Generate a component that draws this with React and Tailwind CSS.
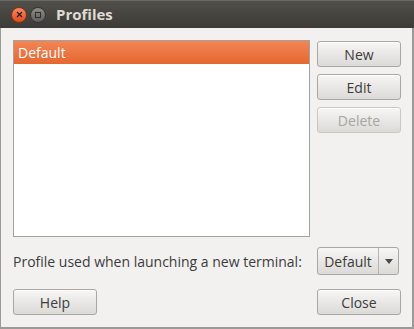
const Button = ({ children, disabled }) => (
  <button
    className={
      "h-[26px] w-[84px] shrink-0 rounded-[3px] border bg-gradient-to-b from-[#f7f6f5] to-[#dcdad7] text-[14px] shadow-[inset_0_1px_0_#ffffff] " +
      (disabled ? "text-[#a6a5a1] border-[#c9c8c4]" : "text-[#3c3c3c] border-[#a8a7a3]")
    }
  >
    {children}
  </button>
);

export default function App() {
  return (
    <div
      className="w-[414px] h-[329px] flex flex-col bg-[#f2f1f0] overflow-hidden"
      style={{ fontFamily: '"Open Sans", "DejaVu Sans", sans-serif' }}
    >
      {/* title bar */}
      <div className="h-[28px] flex items-center bg-gradient-to-b from-[#504f4a] to-[#3c3b37] border-t border-[#6a6964]">
        <div className="ml-[11px] w-[16px] h-[16px] rounded-full bg-gradient-to-b from-[#f58a5f] to-[#df4a1c] border border-[#8a2e12] flex items-center justify-center">
          <svg width="7" height="7" viewBox="0 0 7 7">
            <path d="M1 1 L6 6 M6 1 L1 6" stroke="#3c1a0c" strokeWidth="1.4" />
          </svg>
        </div>
        <div className="ml-[3px] w-[16px] h-[16px] rounded-full bg-gradient-to-b from-[#8d8c87] to-[#5f5e5a] border border-[#353430] flex items-center justify-center">
          <div className="w-[6px] h-[6px] border border-[#2e2d2a]" />
        </div>
        <div className="ml-[10px] text-[15px] font-bold text-[#dfdbd2]">Profiles</div>
      </div>

      {/* body */}
      <div className="flex-1 flex flex-col border-r-2 border-b-2 border-l border-[#9b9a96] pl-[12px] pr-[11px]">
        <div className="mt-[12px] flex gap-[7px]">
          <div className="w-[297px] h-[197px] shrink-0 bg-white border border-[#a3a29e]">
            <div className="h-[23px] flex items-center px-[4px] bg-gradient-to-b from-[#f38555] to-[#e4672f] text-white text-[14px]">
              Default
            </div>
          </div>
          <div className="flex flex-col gap-[7px] mt-[1px]">
            <Button>New</Button>
            <Button>Edit</Button>
            <Button disabled>Delete</Button>
          </div>
        </div>

        <div className="mt-[10px] flex items-center justify-between">
          <span className="text-[14px] text-[#3c3c3c]">Profile used when launching a new terminal:</span>
          <div className="mr-[2px] h-[28px] w-[82px] flex items-center rounded-[3px] border border-[#a8a7a3] bg-gradient-to-b from-[#f7f6f5] to-[#dcdad7] text-[14px] text-[#3c3c3c]">
            <span className="flex-1 text-center">Default</span>
            <div className="h-full w-[20px] border-l border-[#b5b4b0] flex items-center justify-center">
              <svg width="8" height="5" viewBox="0 0 8 5">
                <path d="M0 0 L8 0 L4 5 Z" fill="#4a4a4a" />
              </svg>
            </div>
          </div>
        </div>

        <div className="mt-[14px] flex justify-between">
          <Button>Help</Button>
          <Button>Close</Button>
        </div>
      </div>
    </div>
  );
}
